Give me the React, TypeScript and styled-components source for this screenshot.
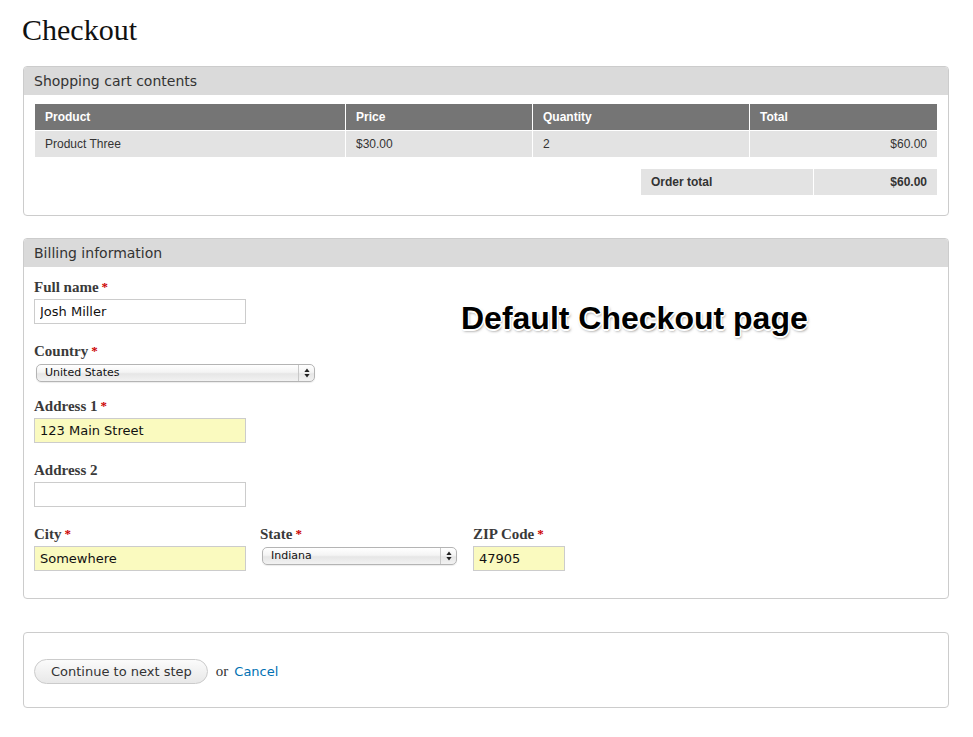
import React from "react";
import styled, { createGlobalStyle } from "styled-components";

const Global = createGlobalStyle`
  html, body { margin: 0; padding: 0; background: #fff; }
  body { font-family: "DejaVu Sans", sans-serif; color: #333; }
  * { box-sizing: border-box; }
`;

const Page = styled.div`
  position: relative;
  width: 973px;
  padding: 12px 24px 28px 23px;
`;

const Title = styled.h1`
  margin: 0 0 18px -1px;
  font-family: "Liberation Serif", serif;
  font-weight: normal;
  font-size: 30px;
  line-height: 36px;
  color: #111;
`;

const Panel = styled.section<{ $gap?: number }>`
  border: 1px solid #cccccc;
  border-radius: 4px;
  overflow: hidden;
  margin-bottom: ${(p) => p.$gap ?? 0}px;
`;

const PanelTitle = styled.div`
  height: 28px;
  line-height: 28px;
  padding-left: 10px;
  background: #dadada;
  font-family: "DejaVu Sans", sans-serif;
  font-size: 14px;
  color: #333;
`;

const PanelBody = styled.div<{ $pad: string }>`
  padding: ${(p) => p.$pad};
`;

const CartGrid = styled.div`
  display: grid;
  grid-template-columns: 310px 186px 216px 1fr;
  gap: 1px;
  background: #fff;
`;

const Cell = styled.div<{ $head?: boolean; $right?: boolean; $bold?: boolean }>`
  height: 26px;
  line-height: 26px;
  padding: 0 10px;
  font-family: "Liberation Sans", Arial, sans-serif;
  font-size: 12px;
  font-weight: ${(p) => (p.$head || p.$bold ? "bold" : "normal")};
  color: ${(p) => (p.$head ? "#fff" : "#333")};
  background: ${(p) => (p.$head ? "#757575" : "#e3e3e3")};
  text-align: ${(p) => (p.$right ? "right" : "left")};
`;

const TotalGrid = styled.div`
  display: grid;
  grid-template-columns: 172px 123px;
  gap: 1px;
  justify-content: end;
  margin-top: 12px;
`;

const Field = styled.div<{ $gap?: number }>`
  display: flex;
  flex-direction: column;
  align-items: flex-start;
  margin-bottom: ${(p) => p.$gap ?? 18}px;
`;

const Label = styled.label`
  font-family: "Liberation Serif", serif;
  font-weight: bold;
  font-size: 15px;
  line-height: 18px;
  color: #3a3a3a;
  margin-bottom: 3px;
`;

const Required = styled.span`
  color: #cc0000;
  font-size: 13px;
  margin-left: 3px;
  vertical-align: 1px;
`;

const TextInput = styled.input<{ $width?: number; $filled?: boolean }>`
  width: ${(p) => p.$width ?? 212}px;
  height: 25px;
  border: 1px solid #cccccc;
  padding: 0 5px;
  margin: 0;
  font-family: "DejaVu Sans", sans-serif;
  font-size: 13px;
  color: #111;
  background: ${(p) => (p.$filled ? "#fafabf" : "#ffffff")};
  outline: none;
`;

const SelectBox = styled.div<{ $width: number }>`
  display: flex;
  align-items: stretch;
  width: ${(p) => p.$width}px;
  height: 18px;
  margin: 1px 0 -2px 2px;
  border: 1px solid #b4b4b4;
  border-radius: 5px;
  background: linear-gradient(#ffffff 0%, #f4f4f4 45%, #e6e6e6 55%, #f2f2f2 100%);
  box-shadow: 0 1px 1px rgba(0, 0, 0, 0.08);
  font-family: "DejaVu Sans", sans-serif;
  font-size: 11px;
  color: #111;
`;

const SelectText = styled.span`
  flex: 1;
  line-height: 16px;
  padding-left: 8px;
`;

const SelectArrows = styled.span`
  width: 16px;
  display: flex;
  align-items: center;
  justify-content: center;
  border-left: 1px solid #c8c8c8;
`;

const AddressRow = styled.div`
  display: grid;
  grid-template-columns: 226px 213px auto;
  align-items: start;
`;

const Actions = styled.div`
  display: flex;
  align-items: center;
  gap: 8px;
`;

const Button = styled.button`
  height: 25px;
  padding: 0 15px 0 16px;
  border: 1px solid #cbcbcb;
  border-radius: 13px;
  background: linear-gradient(#fbfbfb, #e8e8e8);
  font-family: "DejaVu Sans", sans-serif;
  font-size: 13px;
  color: #333;
  cursor: pointer;
`;

const Or = styled.span`
  font-family: "Liberation Serif", serif;
  font-size: 15px;
  color: #333;
`;

const Link = styled.a`
  font-family: "DejaVu Sans", sans-serif;
  font-size: 13px;
  color: #0071b3;
  text-decoration: none;
  margin-left: -2px;
`;

const Overlay = styled.span`
  position: absolute;
  left: 461px;
  top: 298px;
  font-family: "Liberation Sans", Arial, sans-serif;
  font-weight: bold;
  font-size: 32px;
  line-height: 40px;
  color: #000;
  white-space: nowrap;
  text-shadow: 1.5px 0 0 #fff, -1.5px 0 0 #fff, 0 1.5px 0 #fff, 0 -1.5px 0 #fff,
    1px 1px 0 #fff, -1px -1px 0 #fff, 1px -1px 0 #fff, -1px 1px 0 #fff,
    1px 2px 3px rgba(0, 0, 0, 0.55);
`;

const Arrows = () => (
  <svg width="6" height="10" viewBox="0 0 6 10">
    <path d="M3 0.5 L5.6 4 H0.4 Z" fill="#222" />
    <path d="M3 9.5 L5.6 6 H0.4 Z" fill="#222" />
  </svg>
);

const Select = ({ value, width }: { value: string; width: number }) => (
  <SelectBox $width={width}>
    <SelectText>{value}</SelectText>
    <SelectArrows>
      <Arrows />
    </SelectArrows>
  </SelectBox>
);

const Req = () => <Required>*</Required>;

export default function App() {
  return (
    <Page>
      <Global />
      <Title>Checkout</Title>

      <Panel $gap={22}>
        <PanelTitle>Shopping cart contents</PanelTitle>
        <PanelBody $pad="9px 11px 20px 11px">
          <CartGrid>
            <Cell $head>Product</Cell>
            <Cell $head>Price</Cell>
            <Cell $head>Quantity</Cell>
            <Cell $head>Total</Cell>
            <Cell>Product Three</Cell>
            <Cell>$30.00</Cell>
            <Cell>2</Cell>
            <Cell $right>$60.00</Cell>
          </CartGrid>
          <TotalGrid>
            <Cell $bold>Order total</Cell>
            <Cell $bold $right>
              $60.00
            </Cell>
          </TotalGrid>
        </PanelBody>
      </Panel>

      <Panel $gap={33}>
        <PanelTitle>Billing information</PanelTitle>
        <PanelBody $pad="11px 10px 27px 10px">
          <Field>
            <Label>
              Full name
              <Req />
            </Label>
            <TextInput readOnly defaultValue="Josh Miller" />
          </Field>
          <Field $gap={17}>
            <Label>
              Country
              <Req />
            </Label>
            <Select value="United States" width={279} />
          </Field>
          <Field>
            <Label>
              Address 1
              <Req />
            </Label>
            <TextInput readOnly $filled defaultValue="123 Main Street" />
          </Field>
          <Field>
            <Label>Address 2</Label>
            <TextInput readOnly defaultValue="" />
          </Field>
          <AddressRow>
            <Field $gap={0}>
              <Label>
                City
                <Req />
              </Label>
              <TextInput readOnly $filled defaultValue="Somewhere" />
            </Field>
            <Field $gap={0}>
              <Label>
                State
                <Req />
              </Label>
              <Select value="Indiana" width={195} />
            </Field>
            <Field $gap={0}>
              <Label>
                ZIP Code
                <Req />
              </Label>
              <TextInput readOnly $filled $width={92} defaultValue="47905" />
            </Field>
          </AddressRow>
        </PanelBody>
      </Panel>

      <Panel>
        <PanelBody $pad="26px 10px 23px 10px">
          <Actions>
            <Button type="button">Continue to next step</Button>
            <Or>or</Or>
            <Link href="#">Cancel</Link>
          </Actions>
        </PanelBody>
      </Panel>

      <Overlay>Default Checkout page</Overlay>
    </Page>
  );
}
